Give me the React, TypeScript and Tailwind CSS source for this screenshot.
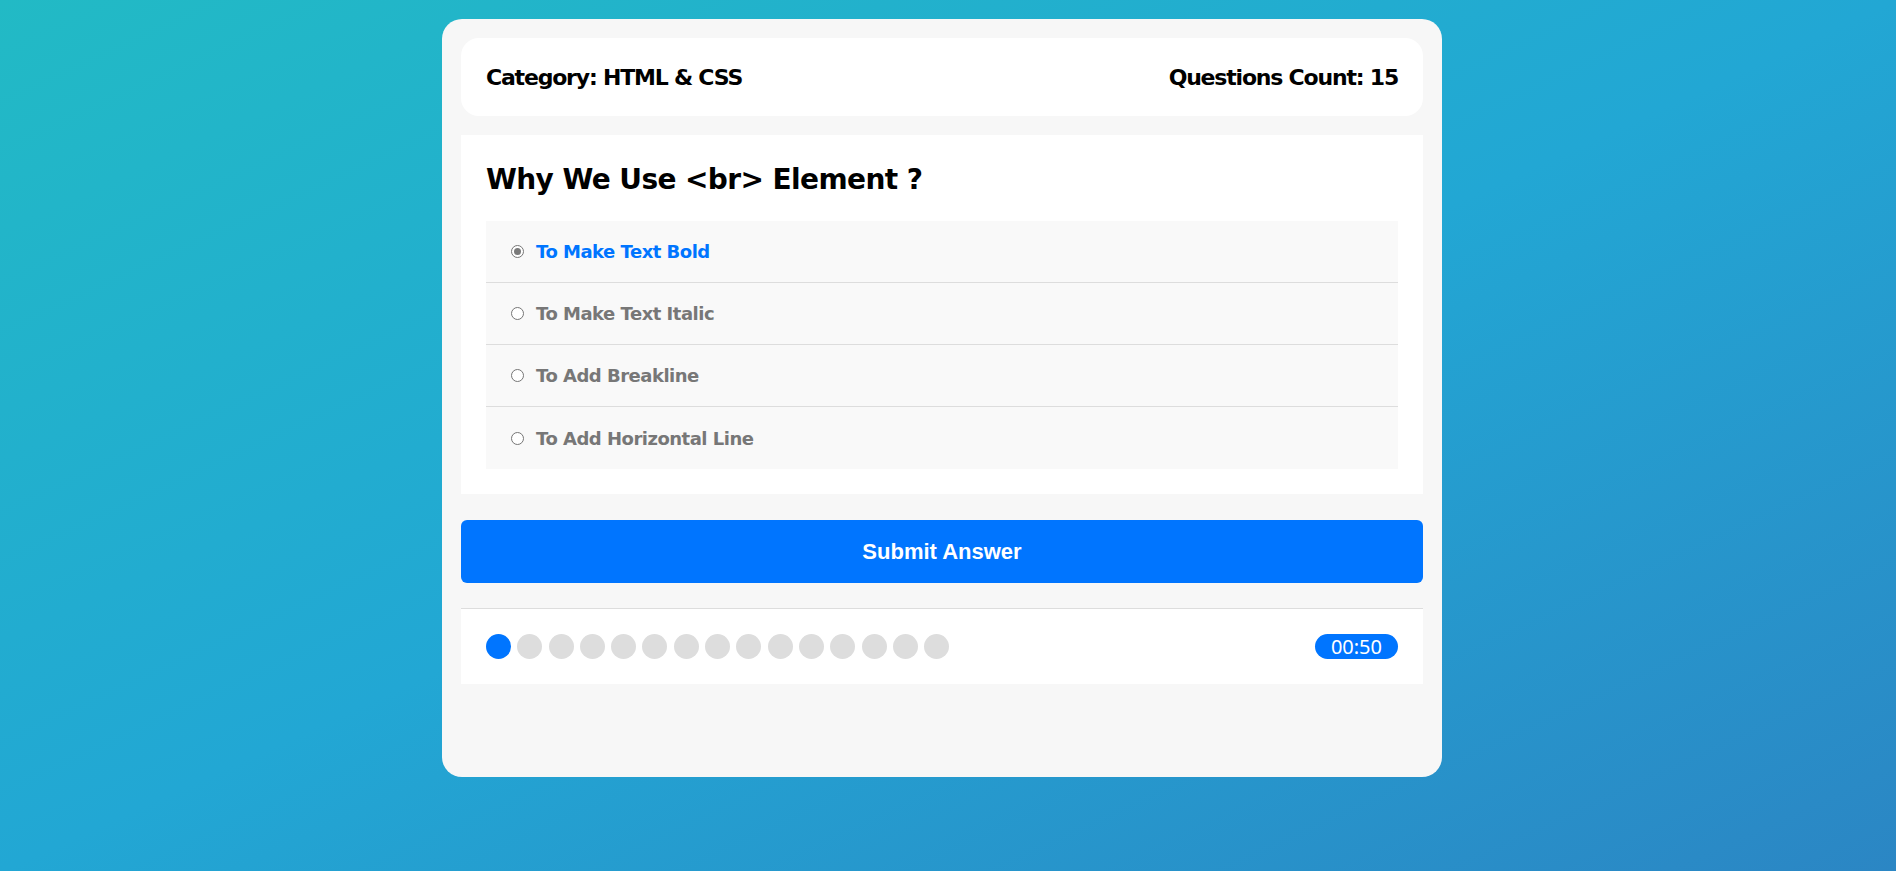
const answers = [
  { text: "To Make Text Bold", checked: true },
  { text: "To Make Text Italic", checked: false },
  { text: "To Add Breakline", checked: false },
  { text: "To Add Horizontal Line", checked: false },
];

const bullets = Array.from({ length: 15 }, (_, i) => i);

function Radio({ checked }: { checked: boolean }) {
  return (
    <span className="ml-[25px] mr-[12px] flex h-[13px] w-[13px] shrink-0 items-center justify-center rounded-full border border-[#767676] bg-white">
      {checked && <span className="h-[7px] w-[7px] rounded-full bg-[#7a7a7a]" />}
    </span>
  );
}

export default function App() {
  return (
    <div className="min-h-[871px] w-full bg-[linear-gradient(to_right_bottom,#22bac5_0%,#22a7d4_50%,#2b86c4_100%)] pt-[19px]">
      <div className="ml-[442px] flex h-[758px] w-[1000px] flex-col rounded-[20px] bg-[#f7f7f7] px-[19px] pt-[19px] font-['DejaVu_Sans',sans-serif]">
        <div className="flex h-[78px] items-center justify-between rounded-[18px] bg-white px-[25px] text-[22px] font-bold tracking-[-1.2px] text-black">
          <div>Category: HTML &amp; CSS</div>
          <div>Questions Count: 15</div>
        </div>

        <div className="mt-[19px] bg-white px-[25px] pb-[25px] pt-[28px]">
          <h2 className="mb-[24px] text-[28px] font-bold leading-[34px] tracking-[-0.6px] text-black">
            Why We Use &lt;br&gt; Element ?
          </h2>
          <div className="bg-[#f9f9f9]">
            {answers.map((a, i) => (
              <div
                key={a.text}
                className={`flex h-[62px] items-center ${i < answers.length - 1 ? "border-b border-[#dddddd]" : ""}`}
              >
                <Radio checked={a.checked} />
                <span
                  className={`text-[18px] font-bold tracking-[-0.5px] ${a.checked ? "text-[#0075ff]" : "text-[#777777]"}`}
                >
                  {a.text}
                </span>
              </div>
            ))}
          </div>
        </div>

        <button className="mt-[26px] h-[63px] w-full rounded-[6px] bg-[#0075ff] font-['Liberation_Sans',Arial,sans-serif] text-[22px] font-bold text-white">
          Submit Answer
        </button>

        <div className="mt-[25px] flex h-[76px] items-center justify-between border-t border-[#dddddd] bg-white px-[25px]">
          <div className="flex gap-[6.3px]">
            {bullets.map((b) => (
              <span
                key={b}
                className={`h-[25px] w-[25px] rounded-full ${b === 0 ? "bg-[#0075ff]" : "bg-[#dddddd]"}`}
              />
            ))}
          </div>
          <span className="flex h-[25px] items-center rounded-full bg-[#0075ff] px-[16px] font-['Noto_Sans',sans-serif] text-[20px] leading-none text-white">
            00:50
          </span>
        </div>
      </div>
    </div>
  );
}
